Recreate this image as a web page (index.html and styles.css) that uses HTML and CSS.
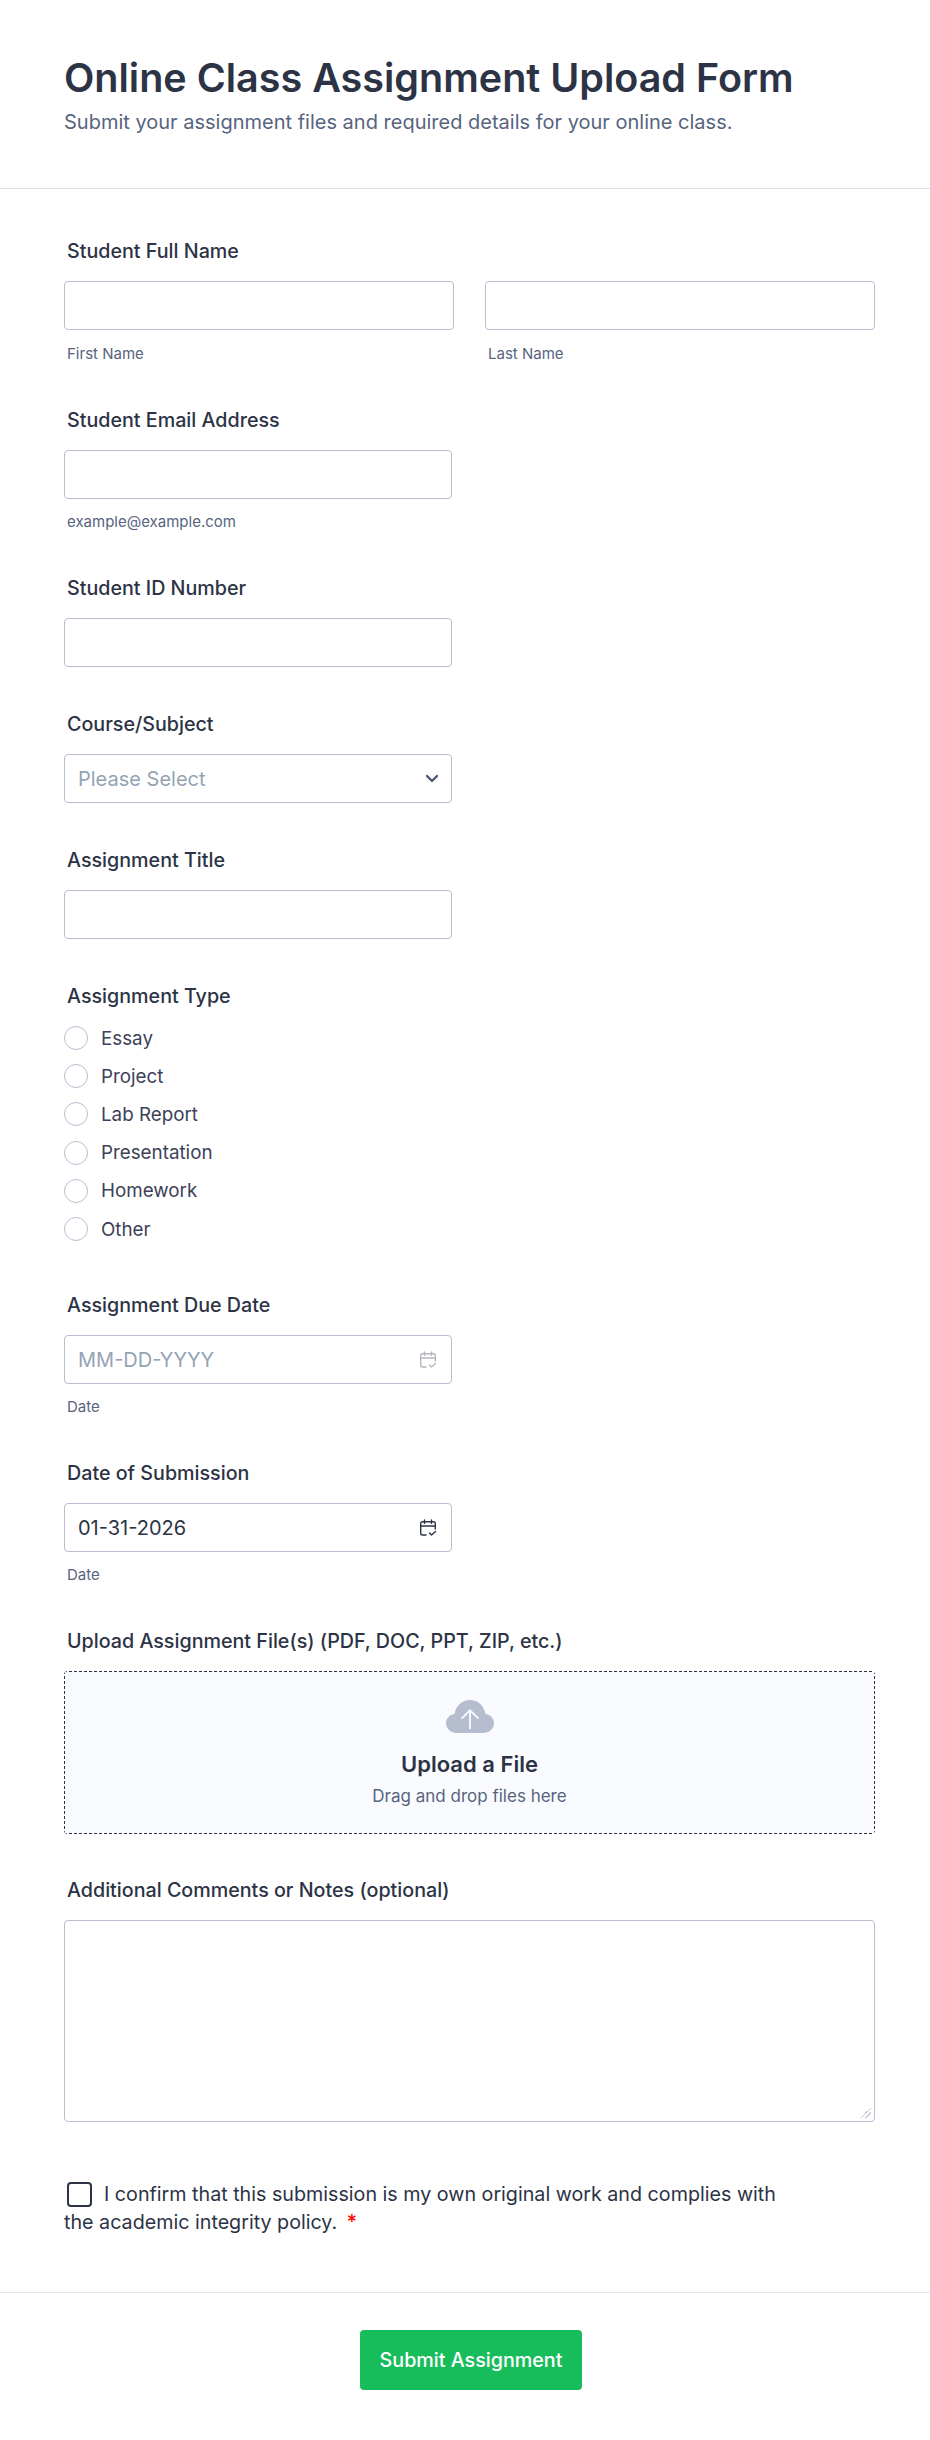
FILE: index.html
```html
<!DOCTYPE html>
<html lang="en">
<head>
    <meta charset="UTF-8">
    <title>Online Class Assignment Upload Form</title>
    <link rel="stylesheet" href="styles.css">
</head>
<body>
<form class="form">
    <header class="form-header">
        <h1>Online Class Assignment Upload Form</h1>
        <p>Submit your assignment files and required details for your online class.</p>
    </header>

    <div class="form-body">
        <div class="field">
            <label class="field-label">Student Full Name</label>
            <div class="name-row">
                <div>
                    <input class="text-input" type="text">
                    <div class="sublabel">First Name</div>
                </div>
                <div>
                    <input class="text-input" type="text">
                    <div class="sublabel">Last Name</div>
                </div>
            </div>
        </div>

        <div class="field">
            <label class="field-label">Student Email Address</label>
            <input class="text-input half" type="text">
            <div class="sublabel">example@example.com</div>
        </div>

        <div class="field">
            <label class="field-label">Student ID Number</label>
            <input class="text-input half" type="text">
        </div>

        <div class="field">
            <label class="field-label">Course/Subject</label>
            <div class="text-input half with-icon">
                <span class="placeholder">Please Select</span>
                <svg class="chevron" width="14" height="9" viewBox="0 0 14 9"><path d="M2 2l5 5 5-5" fill="none" stroke="#4c5674" stroke-width="2.400" stroke-linecap="round" stroke-linejoin="round"/></svg>
            </div>
        </div>

        <div class="field">
            <label class="field-label">Assignment Title</label>
            <input class="text-input half" type="text">
        </div>

        <div class="field">
            <label class="field-label type-label">Assignment Type</label>
            <div class="radio-list">
                <div class="radio-row"><span class="radio"></span>Essay</div>
                <div class="radio-row"><span class="radio"></span>Project</div>
                <div class="radio-row"><span class="radio"></span>Lab Report</div>
                <div class="radio-row"><span class="radio"></span>Presentation</div>
                <div class="radio-row"><span class="radio"></span>Homework</div>
                <div class="radio-row"><span class="radio"></span>Other</div>
            </div>
        </div>

        <div class="field">
            <label class="field-label">Assignment Due Date</label>
            <div class="text-input half with-icon">
                <span class="placeholder">MM-DD-YYYY</span>
                <svg class="calendar faded" width="18" height="18" viewBox="0 0 18 18"><path d="M7 16H3.500A1.800 1.800 0 0 1 1.700 14.200V4.500A1.800 1.800 0 0 1 3.500 2.700h11a1.800 1.800 0 0 1 1.800 1.800V10M1.700 7h14.600M5.500 1v3.400M12.500 1v3.400M10.500 14l2 2 4-3.500" fill="none" stroke="currentColor" stroke-width="1.400" stroke-linecap="round" stroke-linejoin="round"/></svg>
            </div>
            <div class="sublabel">Date</div>
        </div>

        <div class="field">
            <label class="field-label">Date of Submission</label>
            <div class="text-input half with-icon">
                <span class="value">01-31-2026</span>
                <svg class="calendar" width="18" height="18" viewBox="0 0 18 18"><path d="M7 16H3.500A1.800 1.800 0 0 1 1.700 14.200V4.500A1.800 1.800 0 0 1 3.500 2.700h11a1.800 1.800 0 0 1 1.800 1.800V10M1.700 7h14.600M5.500 1v3.400M12.500 1v3.400M10.500 14l2 2 4-3.500" fill="none" stroke="currentColor" stroke-width="1.400" stroke-linecap="round" stroke-linejoin="round"/></svg>
            </div>
            <div class="sublabel">Date</div>
        </div>

        <div class="field">
            <label class="field-label">Upload Assignment File(s) (PDF, DOC, PPT, ZIP, etc.)</label>
            <div class="upload-box">
                <svg width="48" height="33" viewBox="0 0 48 32" preserveAspectRatio="none"><path d="M11 32C5 32 0 28 0 22.500 0 17.500 3.800 14 8.500 13.500 9.800 5.800 16 0 24 0s14.200 5.800 15.500 13.500C44.200 14 48 17.500 48 22.500 48 28 43 32 37 32z" fill="#b6bdcf"/><path d="M24 28V10M15.500 18L24 10l8.500 8" fill="none" stroke="#fbfcff" stroke-width="1.800"/></svg>
                <div class="upload-title">Upload a File</div>
                <div class="upload-hint">Drag and drop files here</div>
            </div>
        </div>

        <div class="field">
            <label class="field-label">Additional Comments or Notes (optional)</label>
            <textarea class="comments"></textarea>
        </div>

        <div class="confirm">
            <span class="checkbox"></span>I confirm that this submission is my own original work and complies with the academic integrity policy. <span class="required">*</span>
        </div>
    </div>

    <footer class="form-footer">
        <button class="submit" type="button">Submit Assignment</button>
    </footer>
</form>
</body>
</html>
```

FILE: styles.css
```css
* {
    box-sizing: border-box;
}

body {
    margin: 0;
    font-family: Inter, "Liberation Sans", sans-serif;
    color: #2c3345;
    background-color: #fff;
}

.form-header {
    height: 189px;
    padding: 54px 64px 0;
    border-bottom: 1px solid #dcdfea;
}

.form-header h1 {
    margin: 0;
    font-size: 39.500px;
    line-height: 48px;
    font-weight: 600;
}

.form-header p {
    margin: 8px 0 0;
    font-size: 20px;
    line-height: 24px;
    color: #57647e;
}

.form-body {
    padding: 51px 55px 0 64px;
}

.field {
    margin-bottom: 46px;
}

.field-label {
    display: block;
    margin: 0 0 19px 3px;
    font-size: 19.700px;
    line-height: 22px;
    font-weight: 500;
}

.type-label {
    margin-bottom: 12px;
}

.name-row {
    display: grid;
    grid-template-columns: 390px 390px;
    column-gap: 31px;
}

.text-input {
    display: block;
    width: 100%;
    height: 49px;
    padding: 0 13px;
    border: 1px solid #b8bdcf;
    border-radius: 4px;
    background: #fff;
    font-family: inherit;
    font-size: 20px;
}

.half {
    width: 388px;
}

.with-icon {
    display: flex;
    align-items: center;
    justify-content: space-between;
}

.placeholder {
    color: #94a3b4;
}

.value {
    color: #2c3345;
}

.calendar {
    margin-right: 1px;
    color: #2c3345;
}

.calendar.faded {
    opacity: 0.350;
}

.chevron {
    margin-right: -1px;
}

.sublabel {
    margin: 14px 0 0 3px;
    font-size: 15px;
    line-height: 18px;
    color: #57647e;
}

.name-row .sublabel {
    margin-top: 15px;
}

.radio-list {
    display: flex;
    flex-direction: column;
}

.radio-row {
    display: flex;
    align-items: center;
    height: 38.200px;
    font-size: 18.800px;
    color: #3b4258;
}

.radio {
    width: 24px;
    height: 24px;
    margin-right: 13px;
    border: 1px solid #b8bdcf;
    border-radius: 50%;
    background: #fff;
}

/* drawn by hand, a dashed border comes out too dotty */
.upload-box {
    display: flex;
    flex-direction: column;
    align-items: center;
    height: 163px;
    margin-bottom: -1px;
    padding-top: 29px;
    border-radius: 4px;
    background-color: #fafbff;
    background-image:
        repeating-linear-gradient(90deg, #2c3345 0 3px, transparent 3px 5px),
        repeating-linear-gradient(90deg, #2c3345 0 3px, transparent 3px 5px),
        repeating-linear-gradient(0deg, #2c3345 0 3px, transparent 3px 5px),
        repeating-linear-gradient(0deg, #2c3345 0 3px, transparent 3px 5px);
    background-size: 100% 1px, 100% 1px, 1px 100%, 1px 100%;
    background-position: top, bottom, left, right;
    background-repeat: no-repeat;
}

.upload-title {
    margin-top: 18px;
    font-size: 22px;
    line-height: 26px;
    font-weight: 600;
}

.upload-hint {
    margin-top: 8px;
    font-size: 17px;
    line-height: 22px;
    color: #57647e;
}

.comments {
    display: block;
    width: 100%;
    height: 202px;
    border: 1px solid #b8bdcf;
    border-radius: 4px;
    resize: none;
    background: linear-gradient(135deg, transparent 50%, #c5c9d6 50%, #c5c9d6 58%, transparent 58%, transparent 72%, #c5c9d6 72%, #c5c9d6 80%, transparent 80%) no-repeat right 3px bottom 3px / 11px 11px;
}

.confirm {
    width: 720px;
    margin-top: 58px;
    font-size: 19.700px;
    line-height: 28px;
    color: #2c3345;
}

.checkbox {
    display: inline-block;
    width: 25px;
    height: 25px;
    margin: 0 12px 0 3px;
    border: 2px solid #2c3345;
    border-radius: 4px;
    vertical-align: -6px;
}

.required {
    margin-left: 4px;
    color: #f00;
    font-weight: 500;
}

.form-footer {
    margin-top: 56px;
    padding: 37px 0 0 12px;
    height: 147px;
    border-top: 1px solid #e6e8f0;
    text-align: center;
}

.submit {
    width: 222px;
    height: 60px;
    border: 0;
    border-radius: 4px;
    background: #18bd5b;
    color: #fff;
    font-family: inherit;
    font-size: 19.700px;
    font-weight: 500;
}
```
